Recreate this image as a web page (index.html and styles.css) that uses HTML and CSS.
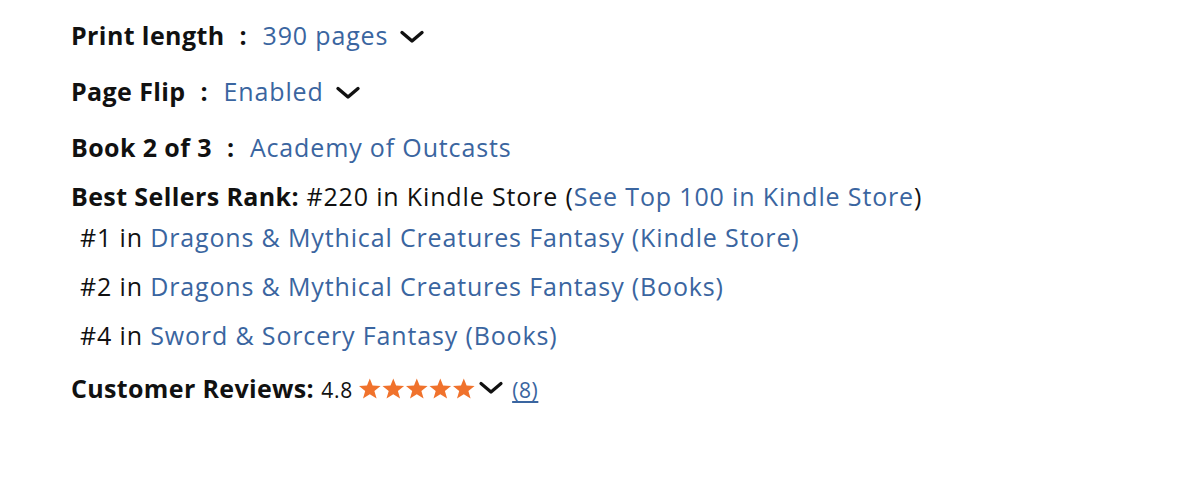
FILE: index.html
```html
<!DOCTYPE html>
<html lang="en">
<head>
    <meta charset="UTF-8">
    <title>Product details</title>
    <link rel="stylesheet" href="styles.css">
</head>
<body>
    <div class="details">
        <div class="specs">
            <div class="row">
                <span class="label">Print length</span><span class="colon">:</span><a class="link" href="#">390 pages</a><svg class="chevron" width="26" height="14" viewBox="0 0 26 14" fill="none" stroke="#111" stroke-width="3.4" stroke-linecap="round" stroke-linejoin="round">
                    <polyline points="3 2.5 13 11 23 2.5"></polyline>
                </svg>
            </div>
            <div class="row">
                <span class="label">Page Flip</span><span class="colon">:</span><a class="link" href="#">Enabled</a><svg class="chevron" width="26" height="14" viewBox="0 0 26 14" fill="none" stroke="#111" stroke-width="3.4" stroke-linecap="round" stroke-linejoin="round">
                    <polyline points="3 2.5 13 11 23 2.5"></polyline>
                </svg>
            </div>
            <div class="row">
                <span class="label">Book 2 of 3</span><span class="colon">:</span><a class="link" href="#">Academy of Outcasts</a>
            </div>
        </div>
        <div class="rank">
            <div class="rank-head"><span class="label">Best Sellers Rank:</span> #220 in Kindle Store (<a class="link" href="#">See Top 100 in Kindle Store</a>)</div>
            <div class="rank-item">#1 in <a class="link" href="#">Dragons &amp; Mythical Creatures Fantasy (Kindle Store)</a></div>
            <div class="rank-item">#2 in <a class="link" href="#">Dragons &amp; Mythical Creatures Fantasy (Books)</a></div>
            <div class="rank-item">#4 in <a class="link" href="#">Sword &amp; Sorcery Fantasy (Books)</a></div>
        </div>
        <div class="reviews">
            <span class="label">Customer Reviews:</span> <span class="score">4.8</span><svg class="stars" width="118" height="21" viewBox="0 0 118 21">
                <g fill="#f0722c">
                    <polygon points="11.8,0.5 14.6,7.6 22.6,7.9 16.4,12.9 18.6,20.5 11.8,16.2 5,20.5 7.2,12.9 1,7.9 9,7.6"></polygon>
                    <polygon points="35.3,0.5 38.1,7.6 46.1,7.9 39.9,12.9 42.1,20.5 35.3,16.2 28.5,20.5 30.7,12.9 24.5,7.9 32.5,7.6"></polygon>
                    <polygon points="58.8,0.5 61.6,7.6 69.6,7.9 63.4,12.9 65.6,20.5 58.8,16.2 52,20.5 54.2,12.9 48,7.9 56,7.6"></polygon>
                    <polygon points="82.3,0.5 85.1,7.6 93.1,7.9 86.9,12.9 89.1,20.5 82.3,16.2 75.5,20.5 77.7,12.9 71.5,7.9 79.5,7.6"></polygon>
                    <polygon points="105.8,0.5 108.6,7.6 116.6,7.9 110.4,12.9 112.6,20.5 105.8,16.2 99,20.5 101.2,12.9 95,7.9 103,7.6"></polygon>
                </g>
            </svg><svg class="chevron-sm" width="26" height="14" viewBox="0 0 26 14" fill="none" stroke="#111" stroke-width="3.2" stroke-linecap="round" stroke-linejoin="round">
                <polyline points="3 2.5 13 11 23 2.5"></polyline>
            </svg><a class="count" href="#">(8)</a>
        </div>
    </div>
</body>
</html>
```

FILE: styles.css
```css
body {
    margin: 0;
    background-color: #fff;
    color: #111;
    font-family: "Open Sans", "Noto Sans", sans-serif;
    font-size: 25px;
    letter-spacing: 0.85px;
}

.details {
    padding: 15px 0 0 71px;
}

.label {
    font-weight: 700;
    letter-spacing: 0.4px;
}

.link {
    color: #3a65a0;
    text-decoration: none;
}

/* spec rows: label : value */
.specs {
    display: flex;
    flex-direction: column;
    gap: 16px;
}

.row {
    line-height: 40px;
}

.colon {
    font-weight: 700;
    margin: 0 15px 0 15px;
}

.chevron {
    margin-left: 11px;
    vertical-align: 1px;
}

/* best sellers */
.rank {
    margin-top: 9px;
}

.rank-head {
    line-height: 40px;
}

.rank-item {
    line-height: 42px;
    padding-left: 9px;
}

.rank-item + .rank-item {
    margin-top: 7px;
}

/* reviews */
.reviews {
    margin-top: 12px;
    line-height: 40px;
    letter-spacing: 0.6px;
}

.reviews .label {
    letter-spacing: 0.35px;
}

.score {
    font-size: 21px;
    letter-spacing: 0.8px;
    margin-right: 5px;
}

.stars {
    vertical-align: -1px;
}

.chevron-sm {
    vertical-align: 3px;
    margin-left: 2px;
}

.count {
    color: #3a65a0;
    font-size: 21px;
    margin-left: 8px;
    text-decoration: underline;
    text-underline-offset: 3px;
}
```
